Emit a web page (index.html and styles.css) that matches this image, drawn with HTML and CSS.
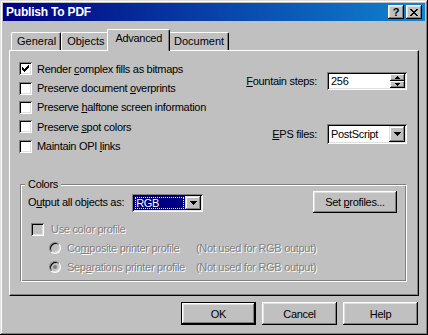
FILE: index.html
```html
<!DOCTYPE html>
<html lang="en">
<head>
  <meta charset="UTF-8" />
  <title>Publish To PDF</title>
  <link rel="stylesheet" href="styles.css">
</head>
<body>

<div class="window">
  <div class="titlebar">
    <span class="title">Publish To PDF</span>
    <div class="caption-buttons">
      <span class="cap-btn help">?</span>
      <span class="cap-btn">
        <svg width="8" height="7" viewBox="0 0 8 7"><path d="M0 0h2v1h-2zM6 0h2v1h-2zM1 1h2v1h-2zM5 1h2v1h-2zM2 2h4v1h-4zM3 3h2v1h-2zM2 4h4v1h-4zM1 5h2v1h-2zM5 5h2v1h-2zM0 6h2v1h-2zM6 6h2v1h-2z" fill="#000"/></svg>
      </span>
    </div>
  </div>

  <div class="content">
    <div class="tabs">
      <div class="tab">General</div>
      <div class="tab">Objects</div>
      <div class="tab active">Advanced</div>
      <div class="tab">Document</div>
    </div>

    <div class="panel">
      <div class="top-section">
        <div class="checks">
          <label class="check-row">
            <span class="checkbox"><svg width="9" height="9" viewBox="0 0 9 9"><path d="M1 3h1v1h1v1h1v-1h1v-1h1v-1h1v-1h1v3h-1v1h-1v1h-1v1h-1v1h-1v-1h-1v-1h-1z" fill="#000"/></svg></span>
            <span>Render <u>c</u>omplex fills as bitmaps</span>
          </label>
          <label class="check-row">
            <span class="checkbox"></span>
            <span>Preserve document <u>o</u>verprints</span>
          </label>
          <label class="check-row">
            <span class="checkbox"></span>
            <span>Preserve <u>h</u>alftone screen information</span>
          </label>
          <label class="check-row">
            <span class="checkbox"></span>
            <span>Preserve <u>s</u>pot colors</span>
          </label>
          <label class="check-row">
            <span class="checkbox"></span>
            <span>Maintain OPI <u>l</u>inks</span>
          </label>
        </div>

        <div class="fields">
          <span class="field-label"><u>F</u>ountain steps:</span>
          <div class="spin-box">
            <span class="spin-value">256</span>
            <div class="spin-buttons">
              <span class="spin-btn"><svg width="5" height="3" viewBox="0 0 5 3"><path d="M2 0h1v1h1v1h1v1h-5v-1h1v-1h1z" fill="#000"/></svg></span>
              <span class="spin-btn"><svg width="5" height="3" viewBox="0 0 5 3"><path d="M0 0h5v1h-1v1h-1v1h-1v-1h-1v-1h-1z" fill="#000"/></svg></span>
            </div>
          </div>
          <span class="field-label"><u>E</u>PS files:</span>
          <div class="combo eps">
            <span class="combo-value">PostScript</span>
            <span class="drop-btn"><svg width="7" height="4" viewBox="0 0 7 4"><path d="M0 0h7v1h-1v1h-1v1h-1v1h-1v-1h-1v-1h-1v-1h-1z" fill="#000"/></svg></span>
          </div>
        </div>
      </div>

      <fieldset class="group">
        <legend>Colors</legend>
        <div class="output-row">
          <span>O<u>u</u>tput all objects as:</span>
          <div class="combo rgb">
            <span class="combo-value selected"><span class="focus">RGB</span></span>
            <span class="drop-btn"><svg width="7" height="4" viewBox="0 0 7 4"><path d="M0 0h7v1h-1v1h-1v1h-1v1h-1v-1h-1v-1h-1v-1h-1z" fill="#000"/></svg></span>
          </div>
          <span class="button profiles"><span>Set <u>p</u>rofiles...</span></span>
        </div>
        <div class="check-row disabled profile-check">
          <span class="checkbox"></span>
          <span>Use color profile</span>
        </div>
        <div class="radio-row disabled">
          <span class="radio"></span>
          <span class="radio-label">Co<u>m</u>posite printer profile</span>
          <span>(Not used for RGB output)</span>
        </div>
        <div class="radio-row disabled">
          <span class="radio checked"></span>
          <span class="radio-label">Sep<u>a</u>rations printer profile</span>
          <span>(Not used for RGB output)</span>
        </div>
      </fieldset>
    </div>

    <div class="actions">
      <span class="button default">OK</span>
      <span class="button">Cancel</span>
      <span class="button">Help</span>
    </div>
  </div>
</div>

</body>
</html>
```

FILE: styles.css
```css
:root {
  --face: #c0c0c0;
  --shadow: #808080;
  --dark: #000;
  --light: #dfdfdf;
  --hilite: #fff;
}

body {
  margin: 0;
  font-family: "Liberation Sans", Arial, sans-serif;
  font-size: 11px;
  letter-spacing: -0.3px;
  color: #000;
  background-color: var(--face);
}

u {
  text-decoration-thickness: 1px;
  text-underline-offset: 1px;
}

.window {
  width: 428px;
  height: 335px;
  box-sizing: border-box;
  padding: 3px;
  background-color: var(--face);
  box-shadow: inset -1px -1px var(--dark), inset 1px 1px var(--light),
              inset -2px -2px var(--shadow), inset 2px 2px var(--hilite);
}

/* title bar */
.titlebar {
  height: 18px;
  display: flex;
  align-items: center;
  justify-content: space-between;
  padding: 0 3px 0 3px;
  background: linear-gradient(to right, #000080, #1084d0);
  color: white;
}

.title {
  font-weight: bold;
  font-size: 12px;
  letter-spacing: -0.2px;
}

.caption-buttons {
  display: flex;
  gap: 2px;
}

.cap-btn {
  width: 16px;
  height: 14px;
  box-sizing: border-box;
  display: flex;
  align-items: center;
  justify-content: center;
  background-color: var(--face);
  color: #000;
  font-weight: bold;
  font-size: 11px;
  letter-spacing: 0;
  box-shadow: inset -1px -1px var(--dark), inset 1px 1px var(--hilite),
              inset -2px -2px var(--shadow), inset 2px 2px var(--light);
}

/* tabs */
.content {
  padding: 0 6px;
}

.tabs {
  display: flex;
  align-items: flex-end;
  margin-top: 8px;
  padding-left: 2px;
  height: 21px;
}

.tab {
  height: 18px;
  box-sizing: border-box;
  padding: 2px 4px 0 5px;
  border-top: 1px solid var(--hilite);
  border-left: 1px solid var(--hilite);
  border-right: 1px solid var(--dark);
  border-radius: 2px 2px 0 0;
  box-shadow: inset -1px 0 var(--shadow);
  line-height: 13px;
  letter-spacing: 0;
}

.tab.active {
  position: relative;
  z-index: 1;
  height: 22px;
  margin: 0 -2px -1px -2px;
  padding: 2px 7px 0 7px;
  letter-spacing: -0.3px;
  background-color: var(--face);
}

.panel {
  height: 246px;
  box-sizing: border-box;
  padding: 8px 11px 0 9px;
  border-top: 1px solid var(--hilite);
  border-left: 1px solid var(--hilite);
  border-right: 1px solid var(--dark);
  border-bottom: 1px solid var(--dark);
  box-shadow: inset -1px -1px var(--shadow);
}

.top-section {
  display: flex;
  justify-content: space-between;
}

.check-row {
  display: flex;
  align-items: center;
  gap: 5px;
  height: 19.4px;
}

.checkbox {
  width: 13px;
  height: 13px;
  flex-shrink: 0;
  box-sizing: border-box;
  display: flex;
  align-items: center;
  justify-content: center;
  background-color: white;
  box-shadow: inset 1px 1px var(--shadow), inset -1px -1px var(--hilite),
              inset 2px 2px var(--dark), inset -2px -2px var(--light);
}

.fields {
  display: grid;
  grid-template-columns: auto 80px;
  column-gap: 10px;
  row-gap: 11px;
  align-items: center;
  margin-top: 1px;
}

.field-label {
  text-align: right;
}

.spin-box,
.combo {
  display: flex;
  align-items: stretch;
  box-sizing: border-box;
  padding: 2px;
  background-color: white;
  box-shadow: inset 1px 1px var(--shadow), inset -1px -1px var(--hilite),
              inset 2px 2px var(--dark), inset -2px -2px var(--light);
}

.spin-box {
  height: 18px;
}

.spin-value,
.combo-value {
  flex: 1;
  display: flex;
  align-items: center;
  padding-left: 2px;
}

.spin-buttons {
  width: 15px;
  display: flex;
  flex-direction: column;
}

.spin-btn {
  flex: 1;
  display: flex;
  align-items: center;
  justify-content: center;
  background-color: var(--face);
  box-shadow: inset -1px -1px var(--dark), inset 1px 1px var(--hilite),
              inset -2px -2px var(--shadow);
}

.combo {
  height: 20px;
}

.drop-btn {
  width: 16px;
  display: flex;
  align-items: center;
  justify-content: center;
  background-color: var(--face);
  box-shadow: inset -1px -1px var(--dark), inset 1px 1px var(--light),
              inset -2px -2px var(--shadow), inset 2px 2px var(--hilite);
}

/* colors group */
.group {
  margin: 22px 0 0 1px;
  padding: 0 9px 4px 4px;
  border-style: solid;
  border-width: 1px;
  border-color: var(--shadow) var(--hilite) var(--hilite) var(--shadow);
  box-shadow: inset 1px 1px var(--hilite), inset -1px -1px var(--shadow);
  min-inline-size: 0;
}

.group legend {
  padding: 0 3px;
  line-height: 13px;
  background-color: var(--face);
}

.output-row {
  display: flex;
  align-items: center;
  gap: 8px;
  height: 22px;
  padding-left: 3px;
}

.combo.rgb {
  width: 71px;
  height: 18px;
  margin-top: 2px;
}

.combo-value.selected {
  padding: 1px;
  background-color: #000080;
  color: white;
}

.focus {
  flex: 1;
  height: 100%;
  box-sizing: border-box;
  padding-left: 1px;
  display: flex;
  align-items: center;
  outline: 1px dotted #ffff80;
  outline-offset: -1px;
}

.button {
  display: flex;
  align-items: center;
  justify-content: center;
  box-sizing: border-box;
  width: 75px;
  height: 23px;
  background-color: var(--face);
  box-shadow: inset -1px -1px var(--dark), inset 1px 1px var(--hilite),
              inset -2px -2px var(--shadow), inset 2px 2px var(--light);
}

.button.profiles {
  width: 84px;
  height: 22px;
  margin-left: auto;
}

.button.default {
  border: 1px solid var(--dark);
}

.disabled {
  color: var(--shadow);
  text-shadow: 1px 1px 0 var(--hilite);
}

.profile-check {
  margin-top: 7px;
  padding-left: 6px;
  height: 19px;
}

.profile-check .checkbox {
  background-color: var(--face);
  margin-right: 2px;
}

.radio-row {
  display: flex;
  align-items: center;
  height: 19px;
  padding-left: 24px;
}

.radio {
  width: 12px;
  height: 12px;
  flex-shrink: 0;
  box-sizing: border-box;
  border-radius: 50%;
  border: 1px solid;
  border-color: var(--shadow) var(--hilite) var(--hilite) var(--shadow);
  box-shadow: inset 1px 1px var(--dark), inset -1px -1px var(--light);
  background-color: var(--face);
  display: flex;
  align-items: center;
  justify-content: center;
  margin-right: 6px;
}

.radio.checked::after {
  content: "";
  width: 4px;
  height: 4px;
  border-radius: 50%;
  background-color: var(--shadow);
}

.radio-label {
  width: 129px;
  flex-shrink: 0;
}

.actions {
  display: flex;
  justify-content: flex-end;
  gap: 6px;
  margin-top: 6px;
  padding-right: 1px;
}
```
